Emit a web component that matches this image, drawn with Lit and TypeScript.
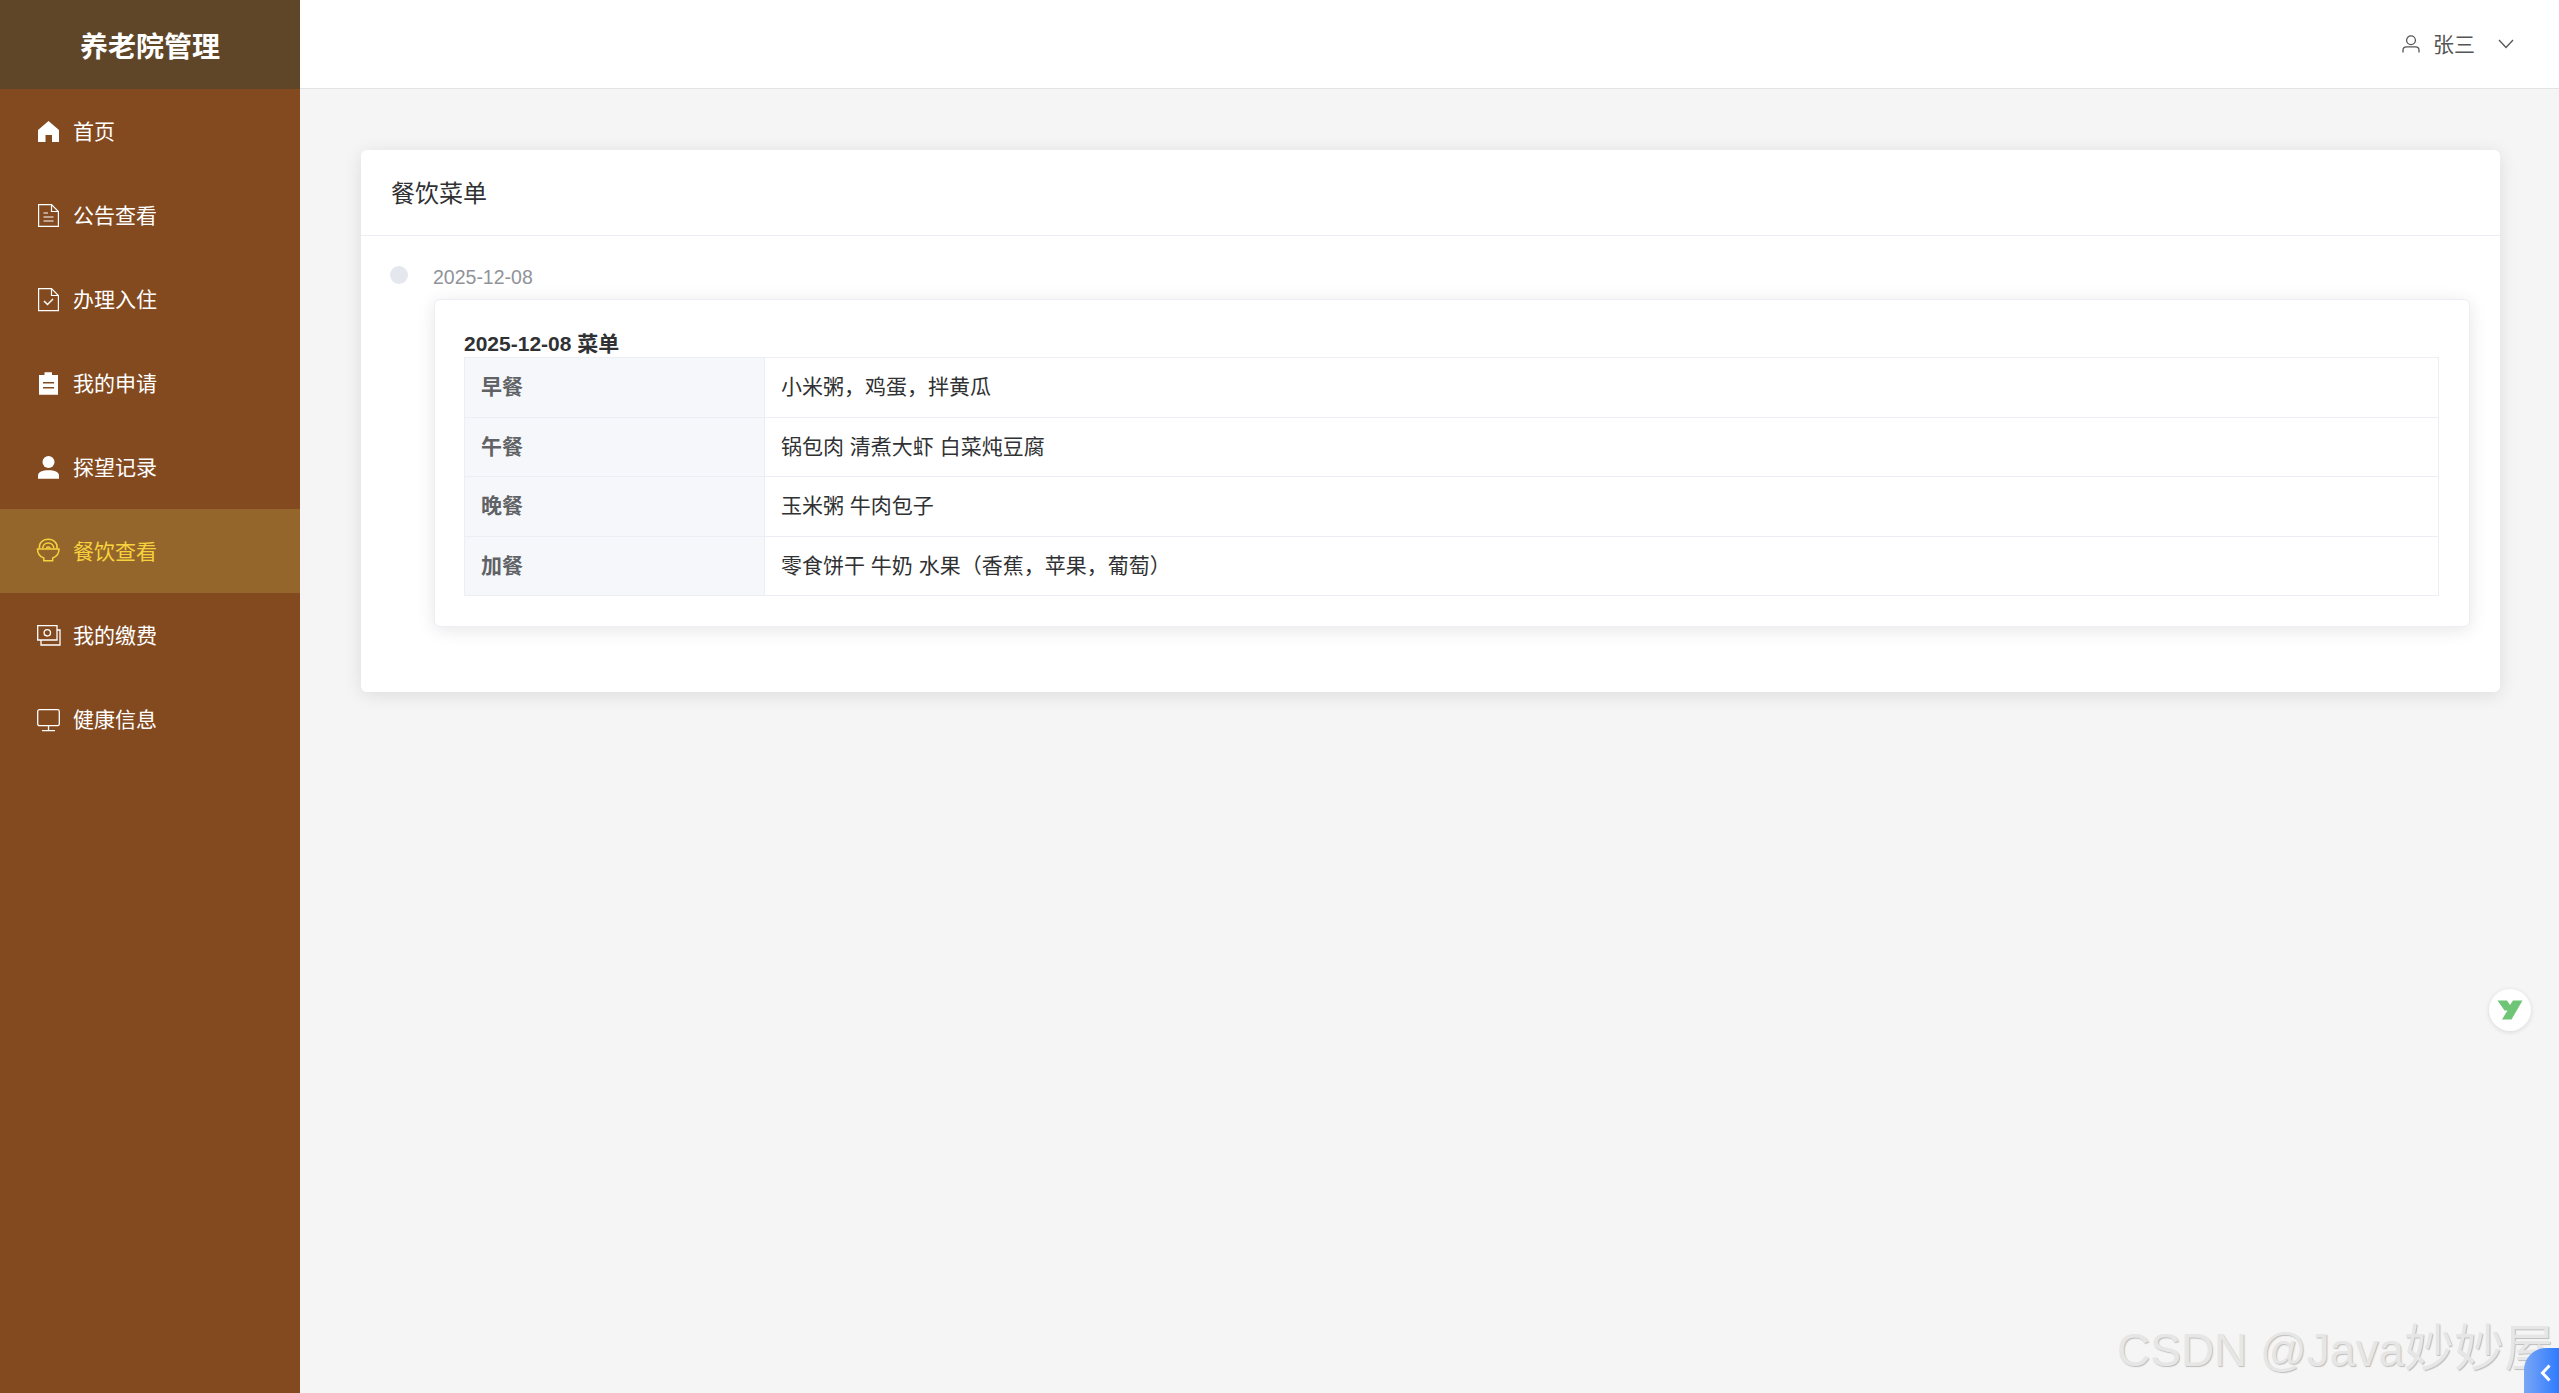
import { LitElement, html, css, svg } from "lit";
import { customElement } from "lit/decorators.js";

const ICONS: Record<string, any> = {
  home: svg`<path fill="currentColor" d="M10.5 0 L21 9 V21 H14 V14 H7.5 V21 H0 V9 Z"/>`,
  doc: svg`<g fill="none" stroke="currentColor" stroke-width="1.2"><path d="M0.6 -0.4 H13.5 L20.4 6.5 V21.4 H0.6 Z"/><path d="M13.5 -0.4 V6.5 H20.4"/><path d="M5.5 8 H10 M5.5 12 H15.5 M5.5 16 H15.5"/></g>`,
  check: svg`<g fill="none" stroke="currentColor" stroke-width="1.2"><path d="M0.6 -0.4 H13.5 L20.4 6.5 V21.6 H0.6 Z"/><path d="M13.5 -0.4 V6.5 H20.4"/><path d="M6 12 L9.5 15.5 L15 10" stroke-width="1.5"/></g>`,
  order: svg`<path fill="currentColor" fill-rule="evenodd" d="M1 2 H6.5 V-0.8 H14 V2 H20 V21.7 H1 Z M5 9 V10.6 H16 V9 Z M5 14 V15.6 H16 V14 Z"/>`,
  user: svg`<circle fill="currentColor" cx="10.5" cy="5" r="6"/><path fill="currentColor" d="M0 21.7 V18.5 C0 15 4.5 13.3 10.5 13.3 S21 15 21 18.5 V21.7 Z"/>`,
  food: svg`<g fill="none" stroke="currentColor" stroke-width="1.5" transform="translate(-1.5 -2.5)"><path d="M1 10.5 H22.5 C22.5 14.8 20 18.2 16.2 19.5 V22.2 H7.3 V19.5 C3.5 18.2 1 14.8 1 10.5 Z"/><path d="M3 10 C2 5 6 0.8 11.7 0.8 S21.5 5 20.5 10"/><path d="M6.2 10 C6.2 6.8 8.5 4.4 11.7 4.4 C15 4.4 17.3 6.8 17.3 10"/><path d="M10 10 C10 8 13.5 8 13.5 10"/></g>`,
  money: svg`<g fill="none" stroke="currentColor" stroke-width="1.3" transform="translate(-1 0)"><path d="M0.7 0.7 H20 V15 H0.7 Z"/><path d="M20 5 H23 V20 H4 V15"/><circle cx="10.3" cy="7.8" r="3.2"/></g>`,
  monitor: svg`<g fill="none" stroke="currentColor" stroke-width="1.3" transform="translate(-1 0)"><rect x="0.7" y="0.7" width="21.6" height="16" rx="1.8"/><path d="M11.5 17 V21.5 M5 21.7 H18"/></g>`,
};

const MENU = [
  { icon: "home", label: "首页" },
  { icon: "doc", label: "公告查看" },
  { icon: "check", label: "办理入住" },
  { icon: "order", label: "我的申请" },
  { icon: "user", label: "探望记录" },
  { icon: "food", label: "餐饮查看", active: true },
  { icon: "money", label: "我的缴费" },
  { icon: "monitor", label: "健康信息" },
];

const ROWS = [
  ["早餐", "小米粥，鸡蛋，拌黄瓜"],
  ["午餐", "锅包肉 清煮大虾 白菜炖豆腐"],
  ["晚餐", "玉米粥 牛肉包子"],
  ["加餐", "零食饼干 牛奶 水果（香蕉，苹果，葡萄）"],
];

@customElement("app-root")
export class AppRoot extends LitElement {
  static styles = css`
    :host {
      display: flex;
      position: relative;
      height: 1393px;
      overflow: hidden;
      background: #f5f5f5;
      font-family: "Liberation Sans", "Noto Sans CJK SC", sans-serif;
      font-size: 21px;
      color: #303133;
    }
    .side { width: 300px; flex: none; background: #834a20; color: #fff; }
    .logo {
      height: 89px;
      display: flex;
      align-items: center;
      justify-content: center;
      background: #5f4628;
      font-size: 28px;
      font-weight: 700;
    }
    .item {
      height: 84px;
      display: flex;
      align-items: center;
      padding-left: 38px;
      gap: 11px;
    }
    .item span { margin-bottom: 3px; }
    .item.active { background: #94662b; color: #f7d23e; }
    .ic { width: 24px; height: 24px; flex: none; overflow: visible; }
    .main { flex: 1; display: flex; flex-direction: column; min-width: 0; }
    .top {
      height: 88px;
      flex: none;
      background: #fff;
      border-bottom: 1px solid #e3e3e3;
      display: flex;
      align-items: center;
      justify-content: flex-end;
      padding-right: 45px;
      color: #555;
    }
    .top span { margin-bottom: 3px; }
    .uicon { width: 18px; height: 18px; margin-right: 13px; }
    .chev { width: 16px; height: 10px; margin-left: 23px; }
    .content { padding: 61px 59px 0 61px; }
    .card {
      background: #fff;
      border-radius: 6px;
      box-shadow: 0 3px 18px rgba(0, 0, 0, 0.1);
    }
    .head {
      height: 86px;
      box-sizing: border-box;
      padding: 0 30px 2px;
      display: flex;
      align-items: center;
      border-bottom: 1px solid #ebeef5;
      font-size: 24px;
    }
    .body { padding: 30px 30px 65px 29px; display: flex; }
    .dot { width: 18px; height: 18px; border-radius: 50%; background: #e4e7ed; flex: none; margin-right: 25px; }
    .tl { flex: 1; min-width: 0; }
    .date { font-size: 19.5px; line-height: 27px; color: #909399; margin-top: -2px; height: 35px; }
    .inner {
      background: #fff;
      border: 1px solid #ebeef5;
      border-radius: 6px;
      box-shadow: 0 3px 18px rgba(0, 0, 0, 0.1);
      padding: 31px 30px 30px 29px;
      margin-left: 1px;
    }
    .title { font-weight: 700; line-height: 26px; }
    table { width: 100%; border-collapse: collapse; table-layout: fixed; }
    th, td { border: 1.5px solid #ebeef5; height: 59.5px; padding: 0 16px 4px; box-sizing: border-box; text-align: left; }
    th { width: 300px; background: #f5f7fa; color: #606266; font-weight: 700; }
    .wm {
      position: absolute;
      left: 2117px;
      top: 1316px;
      font-size: 50px;
      line-height: 66px;
      white-space: nowrap;
      color: #e6e6e6;
      text-shadow: 1px 1px 1px #bdbdbd;
    }
    .wm b { font-weight: 400; font-size: 46px; }
    .badge {
      position: absolute;
      left: 2489px;
      top: 989px;
      width: 42px;
      height: 42px;
      border-radius: 50%;
      background: #fff;
      box-shadow: 0 1px 5px rgba(0, 0, 0, 0.12);
      display: flex;
      align-items: center;
      justify-content: center;
    }
    .tab {
      position: absolute;
      left: 2524px;
      top: 1348px;
      width: 35px;
      height: 45px;
      border-radius: 22px 0 0 0;
      background: linear-gradient(90deg, #79a6f5, #2f7bff);
      color: #fff;
    }
    .tab svg { display: block; margin: 16px 0 0 16px; }
  `;

  render() {
    return html`
      <aside class="side">
        <div class="logo">养老院管理</div>
        ${MENU.map(
          (m) => html`<div class="item ${m.active ? "active" : ""}">
            <svg class="ic" viewBox="0 -2 24 24">${ICONS[m.icon]}</svg>
            <span>${m.label}</span>
          </div>`
        )}
      </aside>
      <div class="main">
        <header class="top">
          <svg class="uicon" viewBox="0 0 18 18" fill="none" stroke="currentColor" stroke-width="1.3">
            <circle cx="9" cy="5.2" r="4.4" />
            <path d="M1 17.5 V15 C1 12.8 2.5 11.8 4.5 11.8 H13.5 C15.5 11.8 17 12.8 17 15 V17.5" />
          </svg>
          <span>张三</span>
          <svg class="chev" viewBox="0 0 16 10" fill="none" stroke="currentColor" stroke-width="1.3">
            <path d="M1 1 L8 8.5 L15 1" />
          </svg>
        </header>
        <main class="content">
          <section class="card">
            <div class="head">餐饮菜单</div>
            <div class="body">
              <div class="dot"></div>
              <div class="tl">
                <div class="date">2025-12-08</div>
                <div class="inner">
                  <div class="title">2025-12-08 菜单</div>
                  <table>
                    ${ROWS.map((r) => html`<tr><th>${r[0]}</th><td>${r[1]}</td></tr>`)}
                  </table>
                </div>
              </div>
            </div>
          </section>
        </main>
      </div>
      <div class="badge">
        <svg width="26" height="20" viewBox="0 0 26 20" fill="#6fc576">
          <path d="M0.5 0.5 H10 L13 5 L16 0.5 H25.5 L14.5 19.5 H5 L10.5 10.5 H7.5 Z" />
        </svg>
      </div>
      <div class="wm"><b>CSDN @Java</b>妙妙屋</div>
      <div class="tab">
        <svg width="12" height="18" viewBox="0 0 12 18" fill="none" stroke="currentColor" stroke-width="3">
          <path d="M9.5 1.5 L2.5 9 L9.5 16.5" />
        </svg>
      </div>
    `;
  }
}
